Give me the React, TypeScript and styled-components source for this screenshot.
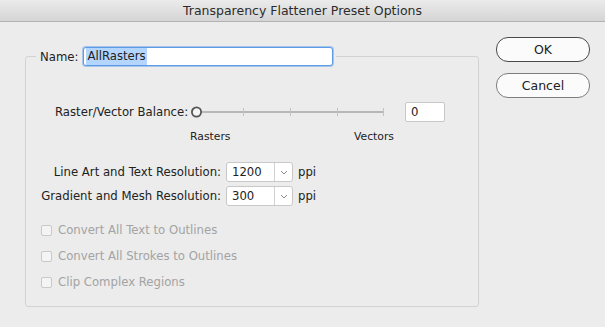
import React from 'react';
import styled, { createGlobalStyle } from 'styled-components';

const GlobalStyle = createGlobalStyle`
  html, body {
    margin: 0;
    padding: 0;
    background: #ececec;
  }
  body {
    font-family: "DejaVu Sans", "Liberation Sans", sans-serif;
  }
`;

const Window = styled.div`
  width: 605px;
  height: 327px;
  background: #ececec;
  display: flex;
  flex-direction: column;
  overflow: hidden;
  color: #222;
  font-size: 11.7px;
`;

const TitleBar = styled.div`
  height: 21px;
  flex: none;
  display: flex;
  align-items: center;
  justify-content: center;
  background: linear-gradient(#ebebeb, #d5d5d5);
  border-bottom: 1px solid #b2b2b2;
  font-size: 12.5px;
  color: #2c2c2c;
`;

const Main = styled.div`
  display: flex;
  flex: 1;
  padding: 25px 15px 0 25px;
`;

const Group = styled.fieldset`
  margin: 0;
  width: 454px;
  padding: 0 0 16px 0;
  border: 1px solid #d2d2d2;
  border-radius: 3px;
  min-width: 0;
  box-sizing: border-box;
  height: 260px;
`;

const Legend = styled.legend`
  margin-left: 10px;
  padding: 0 3px 0 4px;
  display: flex;
  align-items: center;
  gap: 5px;
`;

const NameField = styled.div`
  width: 250px;
  height: 19px;
  box-sizing: border-box;
  background: #fff;
  border: 1px solid #5d9be6;
  box-shadow: 0 0 0 1px rgba(110, 165, 235, 0.55);
  border-radius: 3px;
  display: flex;
  align-items: center;
  padding-left: 2px;
`;

const Selected = styled.span`
  background: #b4d6fe;
  padding: 1px 1px;
  line-height: 15px;
`;

const SliderRow = styled.div`
  display: flex;
  align-items: center;
  height: 20px;
  margin-top: 36px;
  padding-left: 29px;
`;

const SliderLabel = styled.span`
  width: 135px;
  white-space: nowrap;
`;

const ValueBox = styled.div`
  width: 40px;
  height: 20px;
  box-sizing: border-box;
  margin-left: 19px;
  background: #fff;
  border: 1px solid #c8c8c8;
  border-radius: 2px;
  display: flex;
  align-items: center;
  padding-left: 5px;
`;

const ScaleRow = styled.div`
  display: flex;
  justify-content: space-between;
  width: 204px;
  margin: 8px 0 0 164px;
  font-size: 10.8px;
  line-height: 14px;
`;

const ResGrid = styled.div`
  display: grid;
  grid-template-columns: 195px 67px auto;
  column-gap: 5px;
  row-gap: 4px;
  align-items: center;
  margin-top: 18px;
`;

const ResLabel = styled.span`
  text-align: right;
  white-space: nowrap;
`;

const Select = styled.div`
  height: 20px;
  box-sizing: border-box;
  background: #fff;
  border: 1px solid #c8c8c8;
  border-radius: 3px;
  display: flex;
  align-items: center;
`;

const SelectValue = styled.span`
  flex: 1;
  padding-left: 5px;
`;

const SelectArrow = styled.span`
  width: 17px;
  height: 100%;
  border-left: 1px solid #d2d2d2;
  display: flex;
  align-items: center;
  justify-content: center;
`;

const Options = styled.div`
  display: flex;
  flex-direction: column;
  gap: 10px;
  margin-top: 16px;
  padding-left: 15px;
`;

const CheckRow = styled.label`
  display: flex;
  align-items: center;
  gap: 6px;
  height: 16px;
  color: #a3a3a3;
`;

const Box = styled.span`
  width: 11px;
  height: 11px;
  box-sizing: border-box;
  border: 1px solid #c9c9c9;
  border-radius: 2px;
  background: #f4f4f4;
`;

const Buttons = styled.div`
  display: flex;
  flex-direction: column;
  gap: 11px;
  margin-left: auto;
  margin-top: -10px;
`;

const Button = styled.button<{ $default?: boolean }>`
  width: 94px;
  height: 25px;
  border-radius: 12px;
  background: #fbfbfb;
  border: ${(p) => (p.$default ? '1.5px solid #4a4a4a' : '1px solid #7d7d7d')};
  font-family: inherit;
  font-size: 12.5px;
  color: #222;
  padding: 0;
`;

const Chevron = () => (
  <svg width="8" height="5" viewBox="0 0 8 5">
    <path d="M1 1 L4 4 L7 1" fill="none" stroke="#8a8a8a" strokeWidth="1" />
  </svg>
);

const Track = () => (
  <svg width="196" height="14" viewBox="0 0 196 14">
    <line x1="12" y1="7" x2="194" y2="7" stroke="#b8b8b8" strokeWidth="2" />
    {[54, 101, 148, 194].map((x) => (
      <line key={x} x1={x - 0.5} y1="3" x2={x - 0.5} y2="11" stroke="#c2c2c2" strokeWidth="1" />
    ))}
    <circle cx="6.5" cy="7" r="4.6" fill="#f5f5f5" stroke="#555" strokeWidth="1.8" />
  </svg>
);

const resolutions = [
  { label: 'Line Art and Text Resolution:', value: '1200' },
  { label: 'Gradient and Mesh Resolution:', value: '300' },
];

const options = [
  'Convert All Text to Outlines',
  'Convert All Strokes to Outlines',
  'Clip Complex Regions',
];

export default function App() {
  return (
    <>
      <GlobalStyle />
      <Window>
        <TitleBar>Transparency Flattener Preset Options</TitleBar>
        <Main>
          <Group>
            <Legend>
              <span>Name:</span>
              <NameField>
                <Selected>AllRasters</Selected>
              </NameField>
            </Legend>

            <SliderRow>
              <SliderLabel>Raster/Vector Balance:</SliderLabel>
              <Track />
              <ValueBox>0</ValueBox>
            </SliderRow>
            <ScaleRow>
              <span>Rasters</span>
              <span>Vectors</span>
            </ScaleRow>

            <ResGrid>
              {resolutions.map((r) => (
                <React.Fragment key={r.label}>
                  <ResLabel>{r.label}</ResLabel>
                  <Select>
                    <SelectValue>{r.value}</SelectValue>
                    <SelectArrow>
                      <Chevron />
                    </SelectArrow>
                  </Select>
                  <span>ppi</span>
                </React.Fragment>
              ))}
            </ResGrid>

            <Options>
              {options.map((o) => (
                <CheckRow key={o}>
                  <Box />
                  {o}
                </CheckRow>
              ))}
            </Options>
          </Group>

          <Buttons>
            <Button $default>OK</Button>
            <Button>Cancel</Button>
          </Buttons>
        </Main>
      </Window>
    </>
  );
}
